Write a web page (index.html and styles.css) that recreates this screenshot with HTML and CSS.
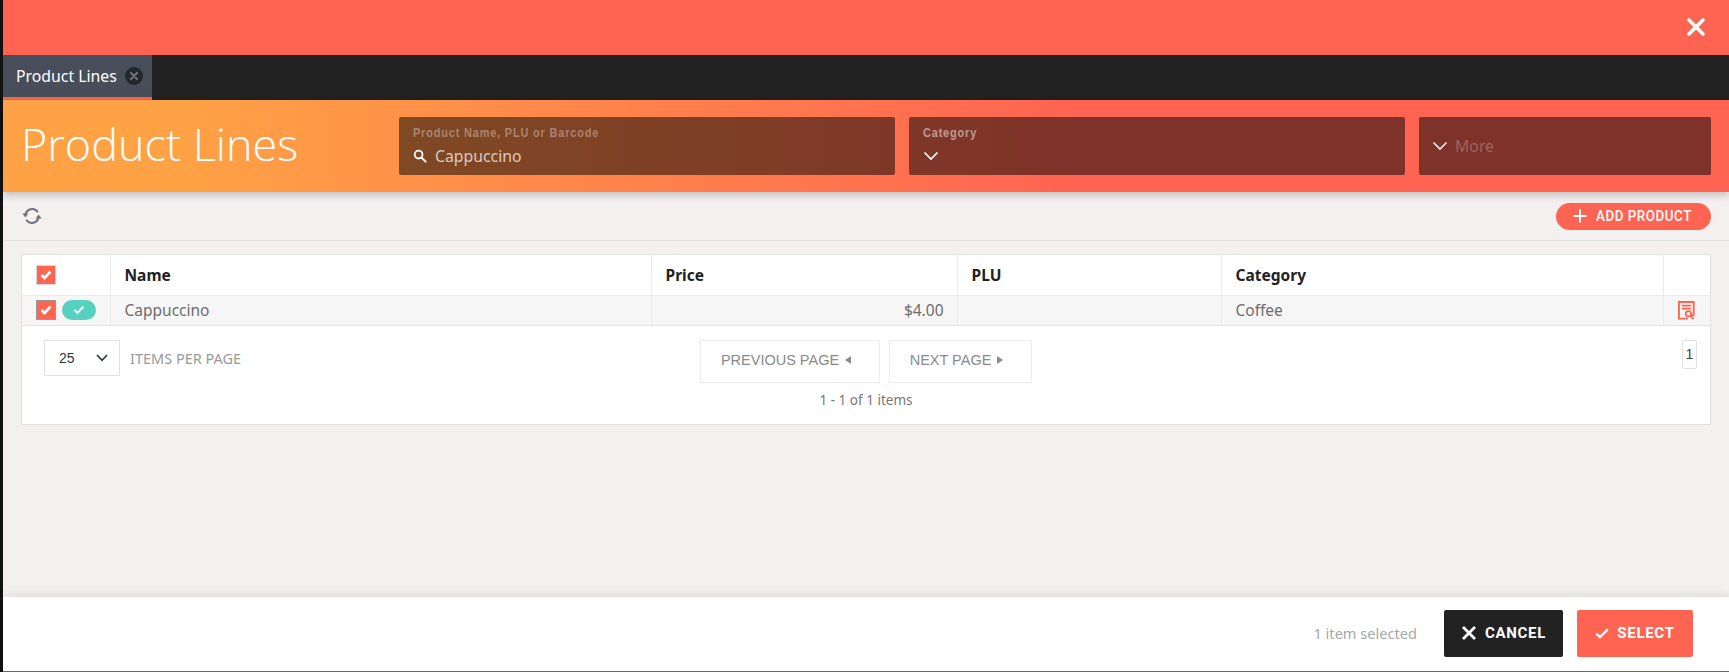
FILE: index.html
```html
<!DOCTYPE html>
<html lang="en">
<head>
<meta charset="utf-8">
<title>Product Lines</title>
<link rel="stylesheet" href="styles.css">
</head>
<body>
<div class="app">
  <div class="topbar">
    <svg class="close-icon" viewBox="0 0 20 20" width="20" height="20"><path d="M3 3L17 17M17 3L3 17" stroke="#fff" stroke-width="3.6" stroke-linecap="round" fill="none"/></svg>
  </div>
  <div class="tabbar">
    <div class="tab">
      <span class="tab-label">Product Lines</span>
      <span class="tab-close"><svg viewBox="0 0 18 18" width="18" height="18"><path d="M6 6L12 12M12 6L6 12" stroke="#6b7079" stroke-width="2.4" stroke-linecap="round" fill="none"/></svg></span>
    </div>
  </div>
  <header class="header">
    <h1 class="title">Product Lines</h1>
    <div class="filters">
      <div class="field">
        <label class="field-label">Product Name, PLU or Barcode</label>
        <div class="field-value">
          <svg class="search-icon" viewBox="0 0 14 14" width="14" height="14"><circle cx="5.6" cy="5.6" r="3.9" stroke="#fff" stroke-width="1.8" fill="none"/><path d="M8.6 8.6L12.6 12.6" stroke="#fff" stroke-width="2" stroke-linecap="round"/></svg>
          <span>Cappuccino</span>
        </div>
      </div>
      <div class="field">
        <label class="field-label">Category</label>
        <div class="field-value">
          <svg viewBox="0 0 16 10" width="16" height="10"><path d="M1.5 1.5L8 8L14.5 1.5" stroke="#fff" stroke-width="1.7" fill="none"/></svg>
        </div>
      </div>
      <div class="field field-more">
        <svg viewBox="0 0 16 10" width="16" height="10"><path d="M1.5 1.5L8 8L14.5 1.5" stroke="#eee" stroke-width="1.7" fill="none"/></svg>
        <span class="more-text">More</span>
      </div>
    </div>
  </header>
  <div class="toolbar">
    <svg class="refresh" viewBox="0 0 20 20" width="20" height="20"><path d="M3.4 9A6.8 6.8 0 0 1 15.8 6.2M16.6 11A6.8 6.8 0 0 1 4.2 13.8" stroke="#6d737c" stroke-width="2" fill="none"/><path d="M0.4 7.6L6.4 7.6L3.4 11.6Z M13.6 12.4L19.6 12.4L16.6 8.4Z" fill="#6d737c"/></svg>
    <button class="add-btn">
      <svg viewBox="0 0 14 14" width="14" height="14"><path d="M7 0.5V13.5M0.5 7H13.5" stroke="#fff" stroke-width="2"/></svg>
      <span class="add-label">ADD PRODUCT</span>
    </button>
  </div>
  <main class="content">
    <div class="grid-card">
      <table class="grid">
        <colgroup>
          <col class="c-check"><col class="c-name"><col class="c-price"><col class="c-plu"><col class="c-cat"><col class="c-act">
        </colgroup>
        <thead>
          <tr>
            <th class="cell-check"><span class="checkbox"><svg viewBox="0 0 12 10" width="12" height="10"><path d="M1.5 5L4.5 8L10.5 1.5" stroke="#fff" stroke-width="2.6" fill="none"/></svg></span></th>
            <th>Name</th>
            <th>Price</th>
            <th>PLU</th>
            <th>Category</th>
            <th></th>
          </tr>
        </thead>
        <tbody>
          <tr>
            <td class="cell-check">
              <div class="check-wrap">
                <span class="checkbox checkbox-row"><svg viewBox="0 0 12 10" width="12" height="10"><path d="M1.5 5L4.5 8L10.5 1.5" stroke="#fff" stroke-width="2.6" fill="none"/></svg></span>
                <span class="pill"><svg viewBox="0 0 12 10" width="12" height="10"><path d="M1.5 5L4.5 8L10.5 1.5" stroke="#e6f8f5" stroke-width="2" fill="none"/></svg></span>
              </div>
            </td>
            <td>Cappuccino</td>
            <td class="num">$4.00</td>
            <td></td>
            <td>Coffee</td>
            <td class="cell-act">
              <svg viewBox="0 0 18 20" width="17" height="19"><path d="M13 15H16.6V1H1V18.6H10.5" stroke="#ff6452" stroke-width="2" fill="none"/><path d="M4 4.8H13.6M4 8H13.6" stroke="#ff6452" stroke-width="1.9"/><circle cx="11" cy="13.5" r="2.9" stroke="#ff6452" stroke-width="1.8" fill="none"/><path d="M13 15.6L16.4 19" stroke="#ff6452" stroke-width="2"/></svg>
            </td>
          </tr>
        </tbody>
      </table>
      <div class="pager">
        <div class="pager-left">
          <div class="select"><span>25</span><svg viewBox="0 0 12 8" width="12" height="8"><path d="M1 1L6 6.4L11 1" stroke="#2d3440" stroke-width="1.6" fill="none"/></svg></div>
          <span class="per-page">ITEMS PER PAGE</span>
        </div>
        <div class="pager-center">
          <div class="pager-buttons">
            <button class="page-btn btn-prev">PREVIOUS PAGE <i class="tri tri-left"></i></button>
            <button class="page-btn btn-next">NEXT PAGE <i class="tri tri-right"></i></button>
          </div>
          <div class="count">1 - 1 of 1 items</div>
        </div>
        <div class="pager-right"><span class="page-num">1</span></div>
      </div>
    </div>
  </main>
  <footer class="footer">
    <span class="selected-count">1 item selected</span>
    <button class="action action-cancel">
      <svg viewBox="0 0 16 16" width="16" height="16"><path d="M2 2L14 14M14 2L2 14" stroke="#fff" stroke-width="2.8" fill="none"/></svg>
      <span>CANCEL</span>
    </button>
    <button class="action action-select">
      <svg viewBox="0 0 14 11" width="14" height="11"><path d="M1.2 5.6L5 9L12.8 1.4" stroke="#fff" stroke-width="2.4" fill="none"/></svg>
      <span>SELECT</span>
    </button>
  </footer>
</div>
</body>
</html>
```

FILE: styles.css
```css
* { box-sizing: border-box; }
html, body { margin: 0; height: 100%; }
body { font-family: "Noto Sans", "Open Sans", sans-serif; background: #f3f0ef; overflow: hidden; }
button { font: inherit; cursor: pointer; }

.app {
  height: 672px;
  display: flex;
  flex-direction: column;
  border-left: 3px solid #111;
  background: #f3f0ef;
}

.topbar {
  height: 55px;
  flex: none;
  background: #ff6452;
  display: flex;
  align-items: center;
  justify-content: flex-end;
  padding: 0 23px 0 0;
}
.close-icon { margin-top: -1px; }

.tabbar { height: 45px; flex: none; background: #222; display: flex; }
.tab {
  width: 149px;
  background: #474e59;
  border-bottom: 3px solid #ff6452;
  display: flex;
  align-items: center;
  padding-left: 13px;
  gap: 8px;
}
.tab-label { color: #fff; font-size: 15.8px; }
.tab-close {
  width: 18px; height: 18px;
  border-radius: 50%;
  background: #24272d;
  display: flex;
}

.header {
  height: 92px;
  flex: none;
  background: linear-gradient(90deg, #ffa245 10%, #ff6452 62%);
  box-shadow: 0 3px 8px rgba(0,0,0,.22);
  display: flex;
  align-items: center;
  padding: 0 18px 0 18px;
  position: relative;
}
.title {
  margin: 0 0 5px;
  width: 378px;
  flex: none;
  color: #fff;
  font-family: "Open Sans", sans-serif;
  font-size: 45px;
  font-weight: 300;
  line-height: 60px;
  white-space: nowrap;
}
.filters { flex: 1; display: flex; gap: 14px; }
.field {
  width: 496px;
  height: 58px;
  background: rgba(0,0,0,.5);
  border-radius: 2px;
  padding: 8px 14px 0;
  flex: none;
}
.field-label {
  display: block;
  color: rgba(255,255,255,.35);
  font-family: "Liberation Sans", sans-serif;
  font-size: 13px;
  font-weight: 700;
  line-height: 16px;
  letter-spacing: 1px;
  white-space: nowrap;
  transform: scaleX(.84);
  transform-origin: left center;
}
.field:nth-child(2) .field-label { color: rgba(255,255,255,.5); }
.field-value {
  display: flex;
  align-items: center;
  gap: 8px;
  height: 26px;
  margin-top: 2px;
  color: rgba(255,255,255,.72);
  font-size: 15.8px;
}
.field-more {
  width: 292px;
  display: flex;
  align-items: center;
  gap: 7px;
  padding: 0 13px;
}
.more-text { color: rgba(255,255,255,.25); font-size: 15.8px; }

.toolbar {
  height: 49px;
  flex: none;
  border-bottom: 1px solid #e6e4e3;
  display: flex;
  align-items: center;
  justify-content: space-between;
  padding: 0 18px 0 19px;
}
.add-btn {
  width: 155px;
  height: 27px;
  border: 0;
  border-radius: 14px;
  background: #ff6452;
  color: #fff;
  display: flex;
  align-items: center;
  padding: 0 0 0 17px;
  gap: 9px;
  font-family: "Roboto", sans-serif;
  font-size: 14.5px;
  font-weight: 500;
  letter-spacing: .6px;
}
.add-label { display: block; white-space: nowrap; transform: scaleX(.92); transform-origin: left center; }

.content { flex: 1; padding: 13px 18px 0; min-height: 0; }
.grid-card {
  background: #fff;
  border: 1px solid #e2e2e2;
  height: 171px;
}
.grid { width: 100%; border-collapse: collapse; table-layout: fixed; }
.c-check { width: 88px; }
.c-name { width: 541px; }
.c-price { width: 306px; }
.c-plu { width: 264px; }
.c-cat { width: 442px; }
.grid th, .grid td {
  padding: 0 14px;
  text-align: left;
  border-left: 1px solid #eceaea;
  white-space: nowrap;
}
.grid th:first-child, .grid td:first-child { border-left: 0; }
.grid th {
  height: 40px;
  font-size: 15.5px;
  font-weight: 700;
  color: #222;
  border-bottom: 1px solid #eceaea;
}
.grid td {
  height: 30px;
  font-size: 15.5px;
  color: #6d6d6d;
  background: #f6f6f6;
  border-bottom: 1px solid #e2e2e2;
}
.grid td.num { text-align: right; padding-right: 13px; }
.grid .cell-check { padding: 0 0 0 14px; }
.grid .cell-act { padding: 0; text-align: center; }
.cell-act svg { display: block; margin: 1px 0 0 14px; }
.check-wrap { display: flex; align-items: center; gap: 6px; }
.checkbox {
  width: 20px;
  height: 20px;
  background: #ff6452;
  border: 1px solid #d8d8d8;
  display: flex;
  align-items: center;
  justify-content: center;
}
.checkbox-row { border: 1px solid #999; }
.pill {
  width: 34px;
  height: 20px;
  border-radius: 10px;
  background: #56d0bf;
  display: flex;
  align-items: center;
  justify-content: center;
}

.pager {
  display: grid;
  grid-template-columns: 1fr auto 1fr;
  padding: 14px 13px 0;
}
.pager-left { display: flex; align-items: flex-start; gap: 10px; padding-left: 9px; }
.select {
  width: 76px;
  height: 36px;
  border: 1px solid #e2e2e2;
  display: flex;
  align-items: center;
  justify-content: space-between;
  padding: 0 11px 0 14px;
  color: #333;
  font-family: "Liberation Sans", sans-serif;
  font-size: 14px;
}
.per-page { color: #9a9a9a; font-size: 14.5px; line-height: 36px; }
.pager-center { display: flex; flex-direction: column; align-items: center; }
.pager-buttons { display: flex; gap: 9px; }
.page-btn {
  height: 43px;
  background: #fff;
  border: 1px solid #ececec;
  color: #8a8a8a;
  font-family: "Liberation Sans", sans-serif;
  font-size: 14.5px;
  padding: 0 8px 2px 0;
  display: flex;
  align-items: center;
  justify-content: center;
  gap: 6px;
}
.btn-prev { width: 180px; }
.btn-next { width: 143px; }
.tri { display: block; width: 0; height: 0; border-top: 4px solid transparent; border-bottom: 4px solid transparent; }
.tri-left { border-right: 6px solid #8a8a8a; }
.tri-right { border-left: 6px solid #8a8a8a; }
.count { margin-top: 7px; color: #777; font-size: 13.5px; line-height: 20px; }
.pager-right { display: flex; justify-content: flex-end; align-items: flex-start; }
.page-num {
  width: 15px;
  height: 29px;
  border: 1px solid #e2e2e2;
  border-radius: 2px;
  color: #444;
  font-family: "Liberation Sans", sans-serif;
  font-size: 14px;
  line-height: 27px;
  text-align: center;
}

.footer {
  height: 75px;
  flex: none;
  background: #fff;
  box-shadow: 0 -3px 8px rgba(0,0,0,.08);
  border-bottom: 1px solid #666;
  display: flex;
  align-items: center;
  justify-content: flex-end;
  padding: 0 36px 2px 0;
  position: relative;
}
.selected-count { color: #a8a8a8; font-size: 14.6px; margin-right: 27px; }
.action {
  height: 47px;
  border: 0;
  border-radius: 2px;
  color: #fff;
  display: flex;
  align-items: center;
  justify-content: center;
  gap: 8px;
  font-family: "Roboto", sans-serif;
  font-size: 15px;
  font-weight: 700;
  letter-spacing: .7px;
  padding: 0;
}
.action-cancel { width: 119px; background: #222; margin-right: 14px; }
.action-select { width: 116px; background: #ff6452; }
```
